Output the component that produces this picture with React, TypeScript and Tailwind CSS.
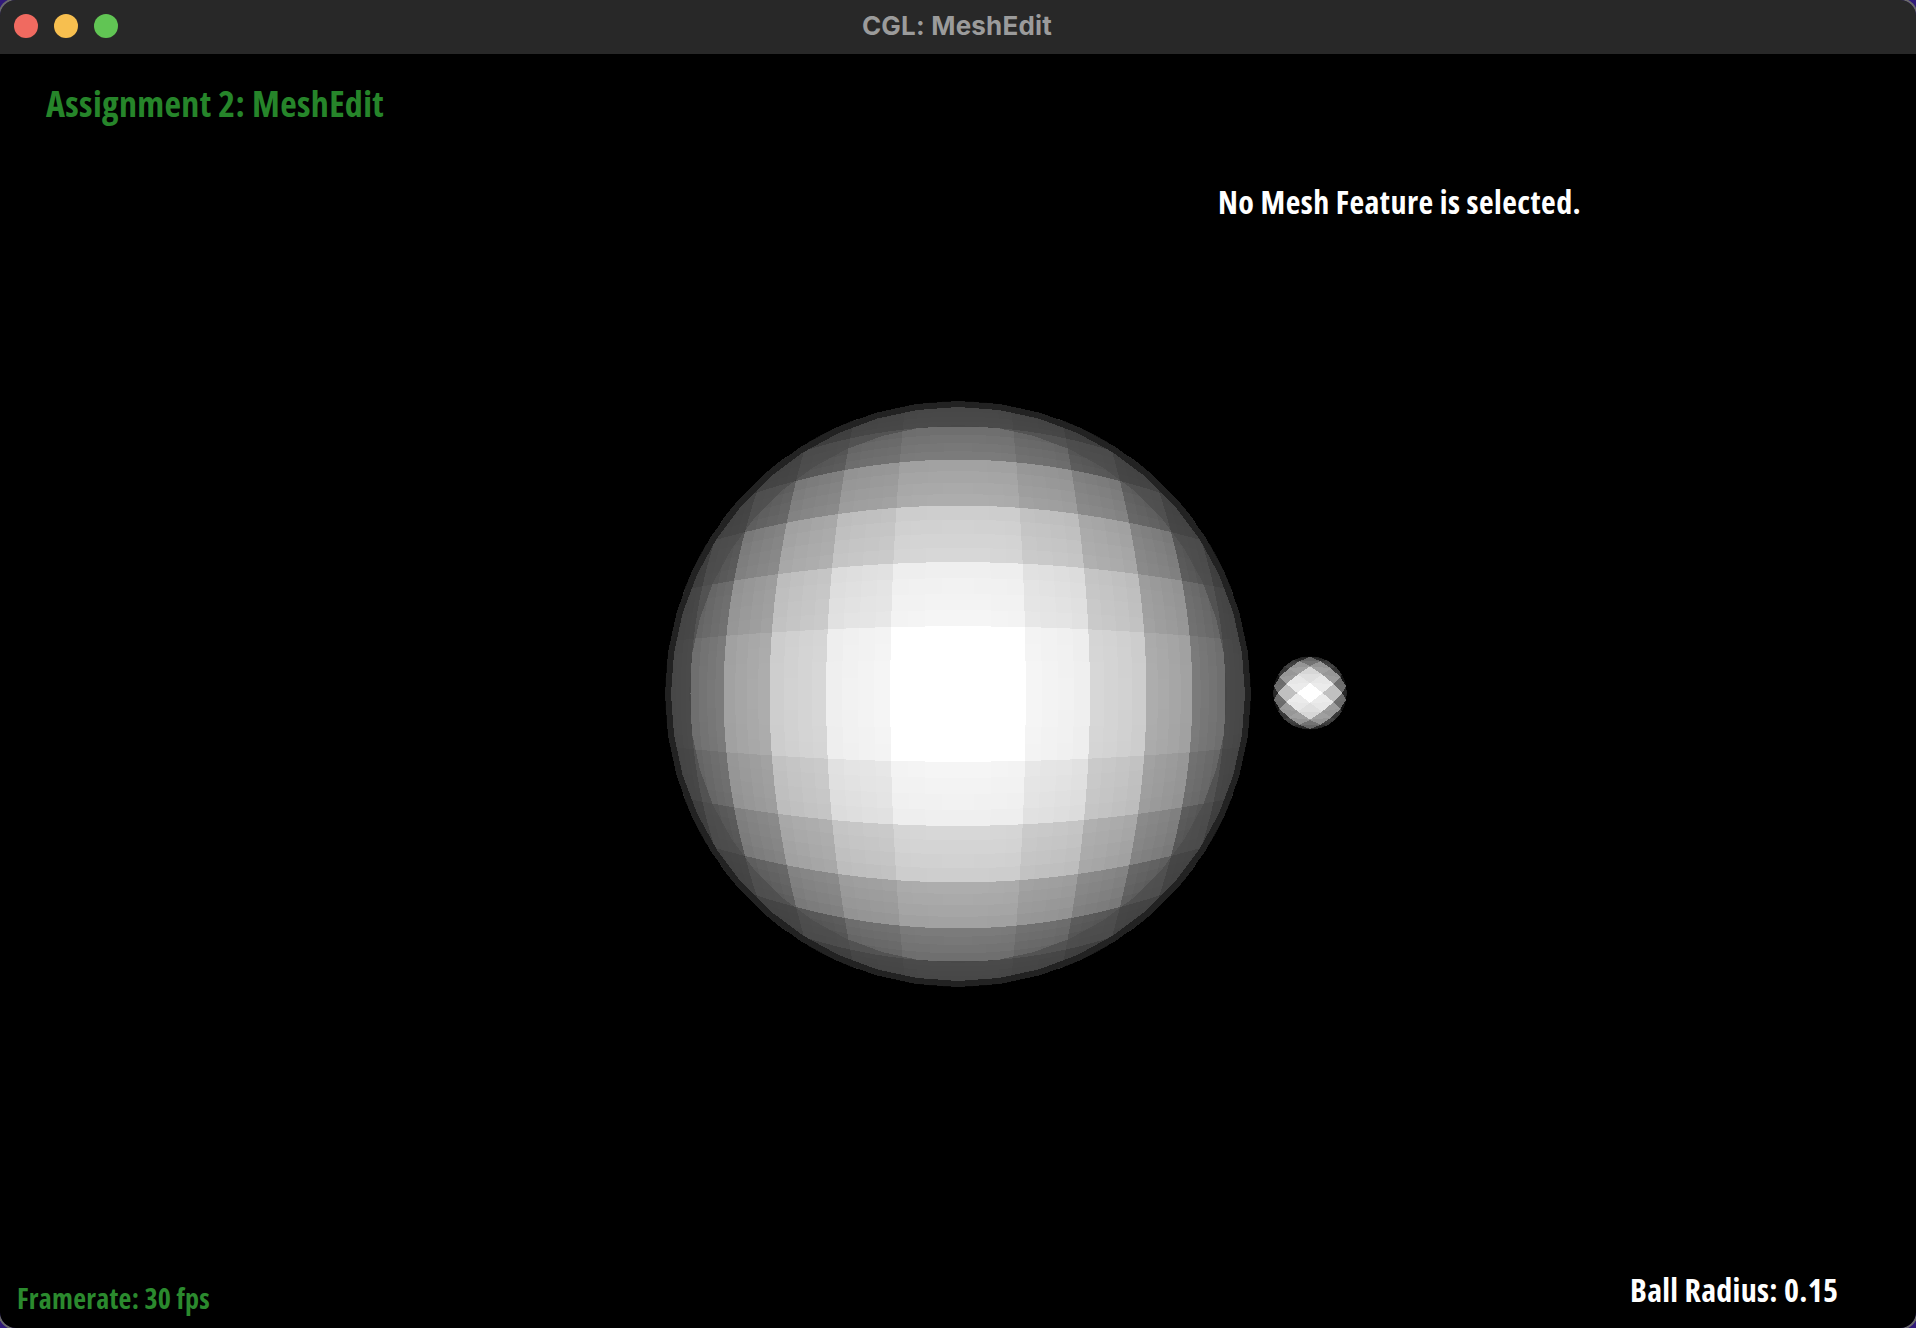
import React from "react";

const hud = { fontFamily: '"Open Sans", sans-serif' };

// where the mesh lines cross the axes, as a fraction of the ball radius
const LINES = [0, 0.231, 0.45, 0.643, 0.8, 0.913, 0.98, 1.08];
const AXIS = [...LINES.slice(1).reverse().map((a) => -a), ...LINES];

const clampToDisc = (x: number, y: number) => {
  const r = Math.hypot(x, y);
  return r > 1 ? [x / r, y / r] : [x, y];
};

const shade = (nz: number) => {
  const v = Math.min(255, Math.round(255 * 1.03 * Math.pow(nz, 1.2)));
  return `rgb(${v},${v},${v})`;
};

const depth = (x: number, y: number) => Math.sqrt(Math.max(0, 1 - x * x - y * y));

const buildBall = () => {
  const SUB = 4;
  const quads: { points: string; fill: string }[] = [];
  const at = (u: number, v: number) =>
    clampToDisc(u * (1 - 0.22 * v * v), v * (1 - 0.22 * u * u));

  for (let i = 0; i < AXIS.length - 1; i++) {
    for (let j = 0; j < AXIS.length - 1; j++) {
      const [u0, u1, v0, v1] = [AXIS[i], AXIS[i + 1], AXIS[j], AXIS[j + 1]];
      const [cx, cy] = at((u0 + u1) / 2, (v0 + v1) / 2);
      const faceZ = depth(cx, cy);
      for (let s = 0; s < SUB; s++) {
        for (let t = 0; t < SUB; t++) {
          const pu = (k: number) => u0 + ((u1 - u0) * k) / SUB;
          const pv = (k: number) => v0 + ((v1 - v0) * k) / SUB;
          const corners = [
            at(pu(s), pv(t)),
            at(pu(s + 1), pv(t)),
            at(pu(s + 1), pv(t + 1)),
            at(pu(s), pv(t + 1)),
          ];
          const [mx, my] = at(pu(s + 0.5), pv(t + 0.5));
          quads.push({
            points: corners.map(([x, y]) => `${(x * 293).toFixed(1)},${(y * 293).toFixed(1)}`).join(" "),
            fill: shade(faceZ * 0.7 + depth(mx, my) * 0.3),
          });
        }
      }
    }
  }
  return quads;
};

// small ball: a rhombic lattice wrapped onto the sphere, each rhombus split in two
const buildSmallBall = () => {
  const R = 37;
  const tris: { points: string; fill: string }[] = [];
  const wrap = (x: number, y: number) => {
    const rho = Math.hypot(x, y);
    if (rho === 0) return [0, 0];
    const r = R * Math.sin(Math.min(rho / R, Math.PI / 2));
    return [(x / rho) * r, (y / rho) * r];
  };
  for (let i = -6; i <= 6; i++) {
    for (let j = -7; j <= 7; j++) {
      if ((i + j) % 2 !== 0) continue;
      const cx = i * 13;
      const cy = j * 10;
      const left = wrap(cx - 13, cy);
      const right = wrap(cx + 13, cy);
      const top = wrap(cx, cy - 10);
      const bottom = wrap(cx, cy + 10);
      const [wx, wy] = wrap(cx, cy);
      [
        [left, right, top],
        [left, right, bottom],
      ].forEach((tri) => {
        const mx = (tri[0][0] + tri[1][0] + tri[2][0]) / 3 / R;
        const my = (tri[0][1] + tri[1][1] + tri[2][1]) / 3 / R;
        tris.push({
          points: tri.map(([x, y]) => `${x.toFixed(1)},${y.toFixed(1)}`).join(" "),
          fill: shade(depth(wx / R, wy / R) * 0.7 + depth(mx, my) * 0.3),
        });
      });
    }
  }
  return tris;
};

const ringPoints = (radius: number) =>
  Array.from({ length: 44 }, (_, k) => {
    const a = (k / 44) * Math.PI * 2;
    return `${(radius * Math.cos(a)).toFixed(1)},${(radius * Math.sin(a)).toFixed(1)}`;
  }).join(" ");

const ball = buildBall();
const smallBall = buildSmallBall();

const App = () => {
  return (
    <div className="h-[1328px] w-full bg-[#30197a] overflow-hidden">
      <div className="relative h-full w-full flex flex-col rounded-[16px] overflow-hidden shadow-[0_0_0_2px_#6a6a6a]">
        {/* Title bar */}
        <div className="relative h-[54px] shrink-0 bg-[#282828] flex items-center justify-center pb-[4px] pr-[2px]">
          <div className="absolute left-[14px] top-[14px] flex gap-4">
            <span className="block h-6 w-6 rounded-full bg-[#f06a60]" />
            <span className="block h-6 w-6 rounded-full bg-[#f7bf4f]" />
            <span className="block h-6 w-6 rounded-full bg-[#61c554]" />
          </div>
          <span
            className="text-[26px] font-bold text-[#9b9b9b] tracking-[0.2px]"
            style={{ fontFamily: '"Inter", sans-serif' }}
          >
            CGL: MeshEdit
          </span>
        </div>

        {/* GL canvas */}
        <div className="relative flex-1 bg-black">
          <svg className="block h-full w-full" viewBox="0 54 1916 1274" shapeRendering="crispEdges">
            <g transform="translate(958 694)">
              {ball.map((q, i) => (
                <polygon key={i} points={q.points} fill={q.fill} />
              ))}
              <polygon points={ringPoints(279)} fill="none" stroke="#4c4c4c" strokeOpacity="0.7" strokeWidth="20" />
              <polygon points={ringPoints(290)} fill="none" stroke="#222222" strokeWidth="6" />
            </g>
            <clipPath id="small-ball-clip">
              <circle cx="0" cy="0" r="37" />
            </clipPath>
            <g transform="translate(1310 693)" clipPath="url(#small-ball-clip)">
              {smallBall.map((t, i) => (
                <polygon key={i} points={t.points} fill={t.fill} />
              ))}
            </g>
          </svg>

          <div
            className="absolute left-[46px] top-[26px] text-[36px] leading-[48px] font-bold text-[#26852a] whitespace-nowrap tracking-[0.35px] [font-stretch:75%]"
            style={hud}
          >
            Assignment 2: MeshEdit
          </div>
          <div
            className="absolute left-[1218px] top-[126px] text-[32px] leading-[44px] font-bold text-white whitespace-nowrap tracking-[0.44px] [font-stretch:75%]"
            style={hud}
          >
            No Mesh Feature is selected.
          </div>
          <div
            className="absolute left-[17px] bottom-[12px] text-[28px] leading-[36px] font-bold text-[#2b8a2e] whitespace-nowrap tracking-[0.25px] [font-stretch:75%]"
            style={hud}
          >
            Framerate: 30 fps
          </div>
          <div
            className="absolute left-[1630px] bottom-[16px] text-[32px] leading-[44px] font-bold text-white whitespace-nowrap tracking-[0.3px] [font-stretch:75%]"
            style={hud}
          >
            Ball Radius: 0.15
          </div>
        </div>
      </div>
    </div>
  );
};

export default App;
